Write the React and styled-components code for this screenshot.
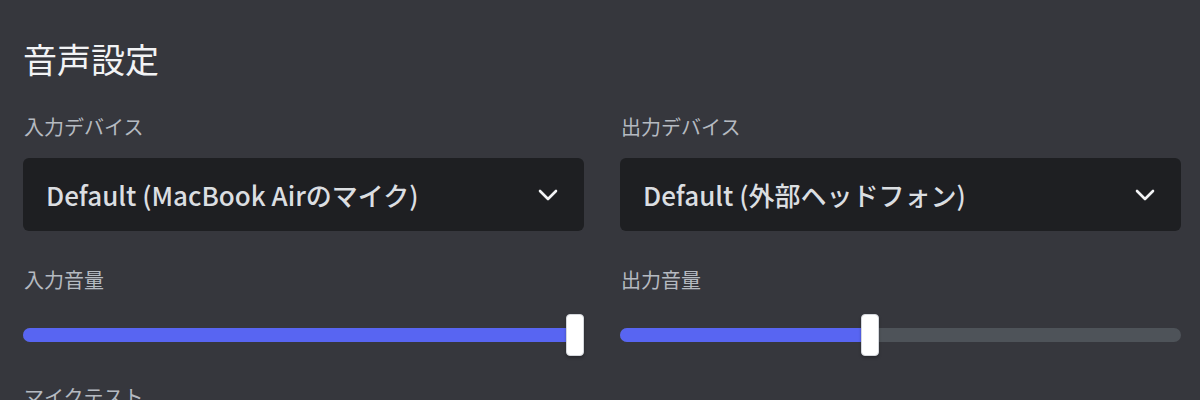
import React from 'react';
import styled, { createGlobalStyle } from 'styled-components';

const GlobalStyle = createGlobalStyle`
	html, body {
		margin: 0;
		background-color: #36373d;
	}
	body {
		font-family: 'Noto Sans CJK JP', 'Noto Sans', sans-serif;
	}
`;

const Page = styled.div`
	width: 1200px;
	height: 400px;
	overflow: hidden;
	box-sizing: border-box;
	padding: 39px 19px 0 23px;
	background-color: #36373d;
`;

const Title = styled.h2`
	margin: 0;
	font-size: 34px;
	line-height: 40px;
	font-weight: 400;
	color: #f2f3f5;
`;

const Grid = styled.div`
	display: grid;
	grid-template-columns: 561px 561px;
	column-gap: 36px;
	margin-top: 36px;
`;

const Field = styled.div`
	display: flex;
	flex-direction: column;
`;

const Label = styled.div`
	font-size: 20px;
	line-height: 24px;
	color: #b5bac1;
	margin-left: 1px;
	margin-top: ${(p) => p.$top || 0}px;
`;

const Select = styled.div`
	margin-top: 19px;
	height: 73px;
	box-sizing: border-box;
	padding: 0 26px 0 23px;
	border-radius: 6px;
	background-color: #1e1f22;
	display: flex;
	align-items: center;
	justify-content: space-between;
	color: #dbdee1;
	font-size: 26px;
	font-weight: 500;
`;

const Chevron = styled.svg`
	width: 20px;
	height: 12px;
	flex-shrink: 0;
`;

const Slider = styled.div`
	position: relative;
	margin-top: 22px;
	height: 42px;
	display: flex;
	align-items: center;
`;

const Track = styled.div`
	position: relative;
	width: 100%;
	height: 14px;
	border-radius: 7px;
	background-color: #4e5359;
	overflow: hidden;
`;

const Fill = styled.div`
	height: 100%;
	background-color: #5865f2;
`;

// thumb sits over the track
const Thumb = styled.div`
	position: absolute;
	top: 0;
	width: 18px;
	height: 42px;
	box-sizing: border-box;
	border-radius: 4px;
	background-color: #ffffff;
	border: 1px solid #d4d7dc;
	box-shadow: 0 2px 3px rgba(0, 0, 0, 0.25);
`;

const Next = styled.div`
	margin-top: 29px;
	font-size: 20px;
	line-height: 24px;
	color: #b5bac1;
	margin-left: 1px;
`;

const VolumeSlider = ({ value }) => {
	const center = 9 + value * 543;
	return (
		<Slider>
			<Track>
				<Fill style={{ width: `${center}px` }} />
			</Track>
			<Thumb style={{ left: `${center - 9}px` }} />
		</Slider>
	);
};

const DeviceField = ({ label, device, volumeLabel, volume }) => (
	<Field>
		<Label>{label}</Label>
		<Select>
			<span>{device}</span>
			<Chevron viewBox="0 0 20 12" fill="none">
				<path
					d="M2 2 L10 10 L18 2"
					stroke="#f2f3f5"
					strokeWidth="2.6"
					strokeLinecap="round"
					strokeLinejoin="round"
				/>
			</Chevron>
		</Select>
		<Label $top={37}>{volumeLabel}</Label>
		<VolumeSlider value={volume} />
	</Field>
);

const App = () => {
	return (
		<Page>
			<GlobalStyle />
			<Title>音声設定</Title>
			<Grid>
				<DeviceField
					label="入力デバイス"
					device="Default (MacBook Airのマイク)"
					volumeLabel="入力音量"
					volume={1}
				/>
				<DeviceField
					label="出力デバイス"
					device="Default (外部ヘッドフォン)"
					volumeLabel="出力音量"
					volume={0.444}
				/>
			</Grid>
			<Next>マイクテスト</Next>
		</Page>
	);
};

export default App;
